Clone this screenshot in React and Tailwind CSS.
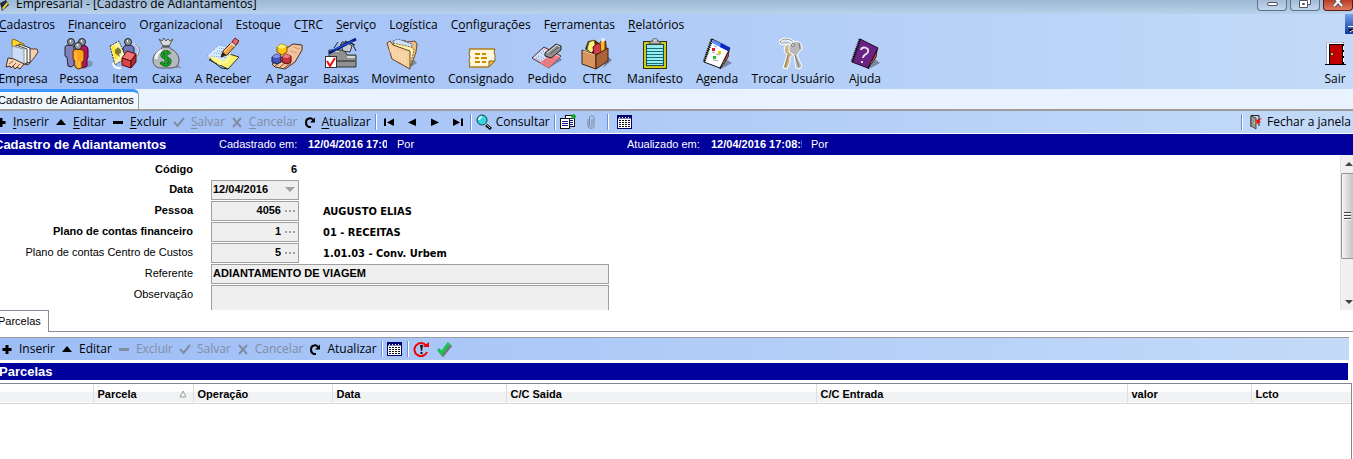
import clsx from 'clsx';

const SEGOE = 'font-["Open_Sans","Noto_Sans",sans-serif]';
const ARIAL = 'font-["Liberation_Sans",Arial,sans-serif]';

/* ---------- Large toolbar icons (32x32) ---------- */

const bigIcons = {
  empresa: (
    <>
      <path d="M17 8 L24 11 H30 L31 14 L27 20 L21 27 L16 26 Z" fill="#f6cfae" stroke="#5a3a28" />
      <path d="M5 3 L6 1 L11 3 L12 4 L17 6 V11 L5 8 Z" fill="#ffd928" stroke="#8a6a00" />
      <path d="M12 6 L23 10 V25 L12 22 Z" fill="#fff" stroke="#333" />
      <path d="M9 7 L20 11 V26 L9 22 Z" fill="#fff" stroke="#333" />
      <path d="M5 8 L17 11 V26 L5 22 Z" fill="#c9dcfa" stroke="#f8f8f8" />
      <path d="M5 8 L17 11 V26 L5 22 Z" fill="none" stroke="#444" strokeWidth="0.6" />
      <path d="M1 20 L7 21 L17 26 L13 31 L10 29 L8 31 L6 28 L4 30 L3 28 L-1 29 Z" fill="#f8d3b4" stroke="#4a2f20" />
      <path d="M2 26 L6 23 M6 28 L9 25 M10 29 L13 26" stroke="#8b5a40" fill="none" />
    </>
  ),
  pessoa: (
    <>
      <path d="M21 31 L29 28 L30 24 L25 22 Z" fill="#7f94c2" />
      <path d="M2 9 Q2 7 6 7 Q11 7 11 9 V27 L8 29 L5 28 L4 19 L2 18 Z" fill="#8580ba" stroke="#25223f" />
      <path d="M15 9 Q16 7 20 7 Q25 8 25 11 V20 L24 21 V28 L20 30 L16 28 Z" fill="#b3145f" stroke="#3d061f" />
      <path d="M10 13 Q11 11 15 11 Q20 11 21 14 V22 L19 24 V30 L15 31 L12 29 V23 L10 21 Z" fill="#ffa11a" stroke="#5d3300" />
      <path d="M13 14 V27 M16 23 V30" stroke="#ffd56a" />
      <circle cx="8" cy="4" r="3.5" fill="#8c9399" stroke="#222" />
      <circle cx="19" cy="4" r="3.5" fill="#8c9399" stroke="#222" />
      <circle cx="15" cy="8" r="3.5" fill="#9ca3a8" stroke="#222" />
      <path d="M7 3 h1 M18 3 h1 M14 7 h1" stroke="#fff" strokeWidth="2" />
    </>
  ),
  item: (
    <>
      <path d="M25 6 C31 7 31 15 27 20" fill="none" stroke="#eef4ff" strokeWidth="2" />
      <path d="M26 6 C32 8 31 16 27 20" fill="none" stroke="#333" strokeWidth="0.7" />
      <path d="M14 10 Q15 7 19 7 Q25 7 25 11 V18 H15 Z" fill="#6f78b5" stroke="#25223f" />
      <circle cx="19" cy="4" r="3.5" fill="#8c9399" stroke="#222" />
      <path d="M18 3 h1" stroke="#fff" strokeWidth="2" />
      <path d="M1 8 L10 3 L17 20 L6 27 Z" fill="#fdf7b5" stroke="#333" strokeDasharray="2 1" />
      <path d="M2 9 L6 7 L9 20 L6 22 Z" fill="#ffe92e" />
      <path d="M6 12 L9 9 L12 12 L12 15 L10 16 L11 19 L8 17 L6 15 Z" fill="#7c7a32" />
      <path d="M13 20 L18 13 L27 16 L22 23 Z" fill="#f27373" stroke="#5b0d10" />
      <path d="M13 20 L22 23 V30 L13 27 Z" fill="#dc4545" stroke="#5b0d10" />
      <path d="M22 23 L27 16 V24 L22 30 Z" fill="#a92b34" stroke="#5b0d10" />
      <path d="M4 25 Q5 31 12 30" fill="none" stroke="#f8fbff" strokeWidth="2" />
    </>
  ),
  caixa: (
    <>
      <path d="M10 30 H31 L27 27 H14 Z" fill="#8a95ab" />
      <path d="M8 1 L11 3 L13 0 L15 3 L17 1 L19 3 L22 1 L18 8 H12 Z" fill="#d7d9db" stroke="#555" />
      <path d="M12 8 H18 L20 11 C25 13 28 18 28 22 C28 27 25 30 20 30 H10 C5 30 2 27 2 22 C2 17 6 13 10 11 Z" fill="#b5b9bb" stroke="#555" />
      <path d="M11 12 C7 14 5 17 5 21" fill="none" stroke="#f7f7f7" strokeWidth="3" />
      <path d="M12 9 H18" stroke="#333" />
      <path d="M19 16 C17 13 11 13 11 17 C11 21 19 19 19 23 C19 28 12 28 10 24 M15 12 V29" fill="none" stroke="#063a0b" strokeWidth="3" />
      <path d="M19 16 C17 13 11 13 11 17 C11 21 19 19 19 23 C19 28 12 28 10 24 M15 12 V29" fill="none" stroke="#14a526" strokeWidth="2" />
    </>
  ),
  receber: (
    <>
      <path d="M2 22 L16 14 L32 19 L21 31 Z" fill="#f6f06c" stroke="#333" />
      <path d="M3 21 L14 30 L21 31" fill="none" stroke="#222" />
      <path d="M0 18 L12 7 L27 11 L17 23 Z" fill="#dcecff" stroke="#6f9ae0" strokeDasharray="1 1" />
      <path d="M5 18 L20 20 M7 15 L22 17 M10 13 L24 14 M12 10 L26 12" stroke="#6a9de8" strokeDasharray="1 1" />
      <path d="M1 18 L7 19 L17 23 L24 15 L21 25 L12 27 Z" fill="#fff98c" />
      <path d="M14 19 L16 13 L27 2 L31 5 L20 17 Z" fill="#f3a44c" stroke="#4b2c12" />
      <path d="M17 14 L27 3" stroke="#ffe0a0" />
      <path d="M14 19 L16 14 L19 17 Z" fill="#222" />
      <path d="M25 4 L28 0 L32 3 L29 7 Z" fill="#ec6b6b" stroke="#6b1a1a" />
      <path d="M24 5 L28 8" stroke="#d8d8d8" strokeWidth="2" />
    </>
  ),
  pagar: (
    <>
      <path d="M10 14 L22 6 L31 7 V12 L24 24 L14 31 L4 29 L1 26 L8 22 Z" fill="#f3c49c" stroke="#4b2e1b" />
      <path d="M4 28 L12 22 M8 30 L16 23 M12 31 L20 25" stroke="#7c5038" fill="none" />
      <path d="M22 9 L29 11 M19 13 L26 15" stroke="#d09a72" />
      <path d="M1 19 L5 16 L10 18 V24 L6 26 L1 24 Z" fill="#4456b8" stroke="#15194a" />
      <path d="M1 19 L5 16 L10 18 L6 20 Z" fill="#8896e6" />
      <path d="M11 19 L15 16 L20 18 V24 L16 26 L11 24 Z" fill="#c9343c" stroke="#4d0b10" />
      <path d="M11 19 L15 16 L20 18 L16 20 Z" fill="#f17f83" />
      <path d="M6 9 L10 6 L16 8 V14 L11 17 L6 14 Z" fill="#ffc414" stroke="#835800" />
      <path d="M6 9 L10 6 L16 8 L11 11 Z" fill="#fff06c" />
    </>
  ),
  baixas: (
    <>
      <path d="M4 12 H19 L22 17 H31 V29 H4 Z" fill="#909090" stroke="#333" />
      <path d="M5 13 H14 M22 19 H30" stroke="#d6d6d6" strokeWidth="2" />
      <path d="M10 23 H30" stroke="#222" />
      <path d="M13 13 L17 4 L27 5 L31 13 M13 4 L9 10 M20 3 L30 7" fill="none" stroke="#222" />
      <path d="M16 7 L22 4 L27 8 L25 14 L18 13 Z" fill="#c9cdd3" stroke="#333" />
      <path d="M4 15 L31 1" stroke="#061a80" strokeWidth="3" />
      <path d="M8 12 L28 3" stroke="#2c65ef" />
      <rect x="0.5" y="18.5" width="11" height="11" fill="#fff" stroke="#333" />
      <path d="M2 23 L5 28 L10 20" fill="none" stroke="#f01010" strokeWidth="2" />
    </>
  ),
  movimento: (
    <>
      <path d="M22 30 L30 25 L27 22 Z" fill="#7d88a0" />
      <path d="M10 6 L17 2 L20 4 L28 3 L30 6 L29 14 L24 28 L12 25 Z" fill="#f1bd83" stroke="#704c2c" />
      <path d="M6 3 L11 1 L25 6 L24 27 L10 20 Z" fill="#cfe0fb" stroke="#526a9a" strokeDasharray="2 1" />
      <path d="M6 5 L24 9 L27 12 L23 29 L12 22 Z" fill="#fff5a8" stroke="#857338" strokeDasharray="2 1" />
      <path d="M0 5 L3 3 L6 7 L23 13 V31 L5 21 Z" fill="#f7cf9e" stroke="#694522" />
      <path d="M3 9 V14 M6 10 V20 M9 11 V22 M12 13 V23 M15 14 V25 M18 15 V27" stroke="#fff1cf" strokeDasharray="1 1" />
    </>
  ),
  consignado: (
    <>
      <path d="M4 11 H30 L29 14 L30 17 V23 L24 29 H4 L5 26 L4 23 L5 19 L4 16 L5 13 Z" fill="#fff7dc" stroke="#8a641a" />
      <path d="M4 11 H30 M4 29 H24" stroke="#c18b20" />
      <path d="M10 16 H15 M17 16 H21 M10 20 H14 M16 20 H22 M10 24 H15 M17 24 H21" stroke="#c98c00" strokeWidth="2" />
      <path d="M24 29 L24 23 L30 23 Z" fill="#f4b92d" stroke="#8a641a" />
    </>
  ),
  pedido: (
    <>
      <path d="M18 30 L31 22 L28 19 Z" fill="#7688b0" />
      <path d="M1 20 L13 9 L30 18 L18 30 Z" fill="#f9b9c2" stroke="#34343c" />
      <path d="M2 20 L12 11 L21 15 L12 24 Z" fill="#cfe0ff" />
      <path d="M9 25 L20 16 L29 19 L18 30 Z" fill="#f67d7d" />
      <path d="M5 20 L20 27 M7 18 L22 25 M10 15 L25 22 M12 13 L20 17" stroke="#7478a8" strokeDasharray="1 2" />
      <path d="M14 15 L25 6 L30 8 V12 L20 20 L14 18 Z" fill="#8f8f8f" stroke="#222" />
      <path d="M16 15 L26 7 L29 9" fill="none" stroke="#dedede" />
      <path d="M19 16 L28 9" stroke="#555" />
    </>
  ),
  ctrc: (
    <>
      <path d="M22 30 L31 22 L27 19 Z" fill="#77809b" />
      <path d="M4 11 L7 3 L14 2 L19 6 L22 1 L25 3 L26 12 L15 18 Z" fill="#4a2b12" />
      <path d="M6 11 L8 4 L13 2 L15 10 L10 15 Z" fill="#fff47a" stroke="#5a5b10" />
      <path d="M12 9 L17 5 L21 8 V15 L13 17 Z" fill="#d23c4c" stroke="#5a0a18" />
      <path d="M19 4 Q22 1 24 4 V14 H20 Z" fill="#ffb52d" stroke="#6d4100" />
      <circle cx="22" cy="2" r="2" fill="#eee" />
      <path d="M1 12 L15 17 V31 L1 26 Z" fill="#d79461" stroke="#3d2312" />
      <path d="M15 17 L27 10 V23 L15 31 Z" fill="#aa6437" stroke="#3d2312" />
      <path d="M2 13 L14 17" stroke="#f5c69b" />
    </>
  ),
  manifesto: (
    <>
      <rect x="4.5" y="3.5" width="23" height="27" fill="#cfc91b" stroke="#33330a" />
      <rect x="7.5" y="6.5" width="17" height="21" fill="#9beaf0" stroke="#124b50" />
      <path d="M8 10.5 H24 M8 13.5 H24 M8 16.5 H24 M8 19.5 H24 M8 22.5 H24 M8 25.5 H24" stroke="#0b6f7c" />
      <path d="M10 6 L12 3 H14 V1 H18 V3 H20 L22 6 Z" fill="#b8b8b8" stroke="#444" />
      <path d="M14 2 H18" stroke="#f4f4f4" />
    </>
  ),
  agenda: (
    <>
      <path d="M20 31 L31 25 L25 21 Z" fill="#7c88a3" />
      <path d="M19 31 L21 24 L28 12 L27 19 Z" fill="#f5c718" stroke="#111" />
      <path d="M23 23 L27 15" stroke="#e12323" strokeWidth="2" />
      <path d="M11 1 L29 10 L19 30 L3 24 Z" fill="#fff" stroke="#111" />
      <path d="M12 2 L28 9 L27 13 L11 5 Z" fill="#5591ff" />
      <path d="M20 5 L29 10 L27 13 L19 9 Z" fill="#0b25c8" />
      <path d="M11 1 L3 24" stroke="#111" strokeWidth="3" strokeDasharray="1 1" />
      <path d="M13 8 L16 9 M11 14 L14 15 M15 16 L19 17 M12 22 L17 23" stroke="#aaa" />
      <rect x="11" y="10" width="3" height="3" fill="#e01428" />
      <rect x="17" y="13" width="3" height="3" fill="#eec900" />
      <rect x="12" y="18" width="3" height="3" fill="#17c238" />
    </>
  ),
  trocar: (
    <>
      <path d="M3 4 C6 -1 14 1 17 5 M3 4 C6 8 10 3 15 6" fill="none" stroke="#fff" strokeWidth="3" />
      <path d="M3 4 C6 -1 14 1 17 5 M3 4 C6 7 10 3 15 6" fill="none" stroke="#8c8c8c" />
      <path d="M8 8 Q13 4 17 9 L16 16 L13 20 L13 24 L10 31 L6 30 L10 17 L7 13 Z" fill="#cab487" stroke="#fff" />
      <path d="M11 17 L8 29" stroke="#8f7443" />
      <path d="M12 8 Q15 3 20 3 Q25 4 25 11 L20 17 L25 28 L23 31 L19 30 L17 17 L12 14 Z" fill="#b9b9b9" stroke="#fff" />
      <path d="M18 17 L22 29 M22 5 L23 11" stroke="#777" />
      <circle cx="16" cy="7" r="1.5" fill="#eee" stroke="#777" />
    </>
  ),
  ajuda: (
    <>
      <path d="M20 31 L31 25 L26 21 Z" fill="#7c88a3" />
      <path d="M19 31 L21 24 L28 12 L27 19 Z" fill="#f5c718" stroke="#111" />
      <path d="M23 23 L27 15" stroke="#e12323" strokeWidth="2" />
      <path d="M11 1 L29 10 L19 30 L3 24 Z" fill="#692483" stroke="#180820" />
      <path d="M11 1 L3 24" stroke="#111" strokeWidth="3" strokeDasharray="1 1" />
      <path d="M12 12 C13 8 20 9 19 14 C18 17 14 16 14 20 M13 23 V25" fill="none" stroke="#e8dcee" strokeWidth="2" />
    </>
  ),
  sair: (
    <>
      <path d="M8 26 V4.5 H25" fill="none" stroke="#808080" />
      <path d="M9 26 V5.5 H24" fill="none" stroke="#fff" strokeWidth="2" />
      <rect x="10" y="6" width="15" height="20" fill="#000" />
      <rect x="11" y="7" width="12" height="19" fill="#c00000" />
      <path d="M24.5 8 V26" stroke="#fff" strokeDasharray="4 2" />
      <circle cx="13" cy="16" r="1.5" fill="#ffe14a" stroke="#000" strokeWidth="0.6" />
      <path d="M6 26.5 H27" stroke="#000" />
    </>
  ),
};

function BigIcon({ name }) {
  return (
    <svg viewBox="0 0 32 32" fill="none" className="h-8 w-8 overflow-visible" aria-hidden="true">
      {bigIcons[name]}
    </svg>
  );
}

/* ---------- Small toolbar icons (16x16) ---------- */

const smallIcons = {
  plus: <path d="M8 4 V13 M3.5 8.5 H12.5" stroke="currentColor" strokeWidth="3" />,
  up: <path d="M8 5 L13 11 H3 Z" fill="currentColor" />,
  minus: <path d="M3 8.5 H13" stroke="currentColor" strokeWidth="3" />,
  check: <path d="M3 8 L6.5 12 L13 4" stroke="currentColor" strokeWidth="2" />,
  x: <path d="M4 4 L12 13 M12 4 L4 13" stroke="currentColor" strokeWidth="2" />,
  refresh: (
    <>
      <path d="M9 13 H7 C3 12 3 5 7 4.5 C9 4 10 4.5 11 6" stroke="currentColor" strokeWidth="2" />
      <path d="M8 8.5 H13 V3.5 Z" fill="currentColor" />
    </>
  ),
  first: <path d="M3 4.5 H5 V12 H3 Z M13 4.5 V12 L6 8.5 Z" fill="currentColor" />,
  prev: <path d="M12 4.5 V12 L4 8.5 Z" fill="currentColor" />,
  next: <path d="M4 4.5 V12 L12 8.5 Z" fill="currentColor" />,
  last: <path d="M11 4.5 H13 V12 H11 Z M3 4.5 V12 L10 8.5 Z" fill="currentColor" />,
  search: (
    <>
      <path d="M10 11 L15 15" stroke="#111" strokeWidth="3" />
      <path d="M10.5 10.5 L14 14" stroke="#b0b0b0" />
      <circle cx="6" cy="6" r="5" fill="#35d5dc" stroke="#15444a" />
      <path d="M3 6 C3 4 5 3 6 3" stroke="#d6ffff" strokeWidth="2" />
    </>
  ),
  copy: (
    <>
      <rect x="5.5" y="1.5" width="9" height="11" fill="#fff" stroke="#111" />
      <path d="M7 4.5 H13 M7 6.5 H13 M7 8.5 H13 M7 10.5 H13" stroke="#111480" />
      <rect x="0.5" y="4.5" width="9" height="10" fill="#fff" stroke="#111" />
      <path d="M2 7.5 H8 M2 9.5 H8 M2 11.5 H8" stroke="#111480" />
      <path d="M13.5 0 V5 M11 2.5 H16" stroke="#12b32b" strokeWidth="2" />
    </>
  ),
  clip: <path d="M5 5 V12 C5 15 11 15 11 12 V4 C11 1 6.5 1 6.5 4 V11 C6.5 13 9 13 9 11 V5" stroke="#7c879c" />,
  grid: (
    <>
      <rect x="0.5" y="1.5" width="14" height="13" fill="#fff" stroke="#00006e" />
      <path d="M0 3 H15" stroke="#00006e" strokeWidth="3" />
      <path d="M2 3.5 H13" stroke="#fff" strokeDasharray="1 2" />
      <path d="M2 6.5 H14 M2 8.5 H14 M2 10.5 H14 M2 12.5 H14" stroke="#111" strokeDasharray="2 1" />
    </>
  ),
  exit: (
    <>
      <path d="M4 13 V1.5 H12 V12" stroke="#222" />
      <path d="M4 2 L9 4 V15 L4 12 Z" fill="#9a9a92" stroke="#333" strokeWidth="0.8" />
      <rect x="7" y="8" width="1" height="2" fill="#f3d400" />
      <path d="M9 6 L15 4 L12 7 L14 8 L10 10 Z" fill="#ef1010" />
    </>
  ),
  recalc: (
    <>
      <path d="M13 4.5 A6.5 6.5 0 1 0 14 11" stroke="#f00000" strokeWidth="2" />
      <path d="M10 6 H16 V1 Z" fill="#f00000" />
      <path d="M7 4 H10 L9 10 H8 Z M7.5 11 H9.5 V13 H7.5 Z" fill="#111" />
    </>
  ),
  confirm: (
    <>
      <path d="M4 10 L7 14 L15 4" stroke="#6d7c74" strokeWidth="3" />
      <path d="M2 8 L5.5 12 L13 2" stroke="#18c552" strokeWidth="3" />
    </>
  ),
};

function SmallIcon({ name }) {
  return (
    <svg viewBox="0 0 16 16" fill="none" className="h-4 w-4 shrink-0" aria-hidden="true">
      {smallIcons[name]}
    </svg>
  );
}

/* ---------- Shared pieces ---------- */

// "&" marks the underlined access key
function Mnemonic({ text }) {
  const i = text.indexOf('&');
  if (i < 0) return <span>{text}</span>;
  return (
    <span>
      {text.slice(0, i)}
      <u className="underline-offset-2">{text[i + 1]}</u>
      {text.slice(i + 2)}
    </span>
  );
}

function ToolButton({ icon, label, title, disabled }) {
  return (
    <button
      disabled={disabled}
      aria-label={title}
      className={clsx(
        'flex items-center gap-1 whitespace-nowrap',
        disabled ? 'text-[#828da3]' : 'text-black'
      )}
    >
      <SmallIcon name={icon} />
      {label && <Mnemonic text={label} />}
    </button>
  );
}

function Separator() {
  return <div className="h-4 w-[2px] border-l border-r border-l-[#6d8fd6] border-r-white" />;
}

const menus = [
  '&Cadastros', '&Financeiro', 'Organizacional', 'Estoque', 'C&TRC', '&Serviço',
  'Logística', 'C&onfigurações', 'F&erramentas', '&Relatórios',
];

const modules = [
  ['empresa', 'Empresa', 'w-11'],
  ['pessoa', 'Pessoa', 'w-9'],
  ['item', 'Item', 'w-6'],
  ['caixa', 'Caixa', 'w-7'],
  ['receber', 'A Receber', 'w-13'],
  ['pagar', 'A Pagar', 'w-11'],
  ['baixas', 'Baixas', 'w-8'],
  ['movimento', 'Movimento', 'w-15'],
  ['consignado', 'Consignado', 'w-16'],
  ['pedido', 'Pedido', 'w-9'],
  ['ctrc', 'CTRC', 'w-8'],
  ['manifesto', 'Manifesto', 'w-13'],
  ['agenda', 'Agenda', 'w-10'],
  ['trocar', 'Trocar Usuário', 'w-20'],
  ['ajuda', 'Ajuda', 'w-8'],
];

const columns = [
  ['', 'w-[93px]'],
  ['Parcela', 'w-[100px]'],
  ['Operação', 'w-[139px]'],
  ['Data', 'w-[174px]'],
  ['C/C Saida', 'w-[310px]'],
  ['C/C Entrada', 'w-[311px]'],
  ['valor', 'w-[124px]'],
  ['Lcto', ''],
];

function ModuleButton({ icon, label, width }) {
  return (
    <button className={clsx('flex flex-col items-center whitespace-nowrap', width)}>
      <BigIcon name={icon} />
      <span className="leading-[18px]">{label}</span>
    </button>
  );
}

function TitleBar() {
  return (
    <header className="flex h-[14px] items-start overflow-hidden bg-linear-to-b from-[#9db8d3] to-[#b9d2ec]">
      <svg viewBox="0 0 12 12" className="h-3 w-3 shrink-0" aria-hidden="true">
        <path d="M0 3 L6 0 L9 5 L2 11 Z" fill="#222a3a" />
        <path d="M2 8 L7 2 L8 4 L3 10 Z" fill="#f0d238" />
      </svg>
      <h1 className="-mt-[5px] ml-1 flex-1 leading-[18px]">Empresarial - [Cadastro de Adiantamentos]</h1>
      <div className="flex gap-[3px]">
        <button aria-label="Minimizar" className="flex h-[11px] w-[30px] justify-center rounded-b-sm border border-t-0 border-[#5a7290] bg-linear-to-b from-[#a3bbd5] to-[#c4d8ec]">
          <span className="mt-[2px] h-1 w-[11px] rounded-xs border border-[#535666] bg-white" />
        </button>
        <button aria-label="Restaurar" className="flex h-[11px] w-[30px] justify-center rounded-b-sm border border-t-0 border-[#5a7290] bg-linear-to-b from-[#a3bbd5] to-[#c4d8ec]">
          <svg viewBox="0 0 12 8" className="h-2 w-3" fill="#fff" stroke="#535666">
            <path d="M3.5 -1 H11.5 V4.5 H3.5 Z" />
            <path d="M0.5 0.5 H8.5 V7.5 H0.5 Z" />
            <path d="M3.5 3.5 H5.5 V4.5 H3.5 Z" />
          </svg>
        </button>
        <button aria-label="Fechar" className="flex h-[11px] w-[30px] justify-center rounded-b-sm border border-t-0 border-[#5c1a12] bg-linear-to-b from-[#b83c28] to-[#de7a60]">
          <svg viewBox="0 0 12 8" className="h-2 w-3" fill="none">
            <path d="M2 -3 L10 6 M10 -3 L2 6" stroke="#535666" strokeWidth="4" />
            <path d="M2 -3 L10 6 M10 -3 L2 6" stroke="#fff" strokeWidth="2" />
          </svg>
        </button>
      </div>
    </header>
  );
}

function MainMenu() {
  return (
    <div className="bg-linear-to-r from-[#9dbdf6] to-[#c3daf8]">
      <div className="flex h-[22px] items-start justify-between">
        <nav className="-ml-px flex h-[22px] items-center gap-[13px]">
          {menus.map((m) => (
            <button key={m}><Mnemonic text={m} /></button>
          ))}
        </nav>
        <button aria-label="Mais botões" className="flex h-5 w-2 items-end overflow-hidden bg-linear-to-b from-[#769fe8] to-[#0a3a9c]">
          <svg viewBox="0 0 8 8" className="h-2 w-2">
            <path d="M3 0.5 H8" stroke="#fff" />
            <path d="M3 3 H8 V5 L6 6 Z" fill="#000" />
            <path d="M5 6 L8 4" stroke="#fff" />
          </svg>
        </button>
      </div>
      <div className="flex h-[53px] items-start justify-between pt-[2px] pr-2">
        <div className="ml-px flex gap-4">
          {modules.map(([icon, label, width]) => (
            <ModuleButton key={icon} icon={icon} label={label} width={width} />
          ))}
        </div>
        <ModuleButton icon="sair" label="Sair" width="w-5" />
      </div>
    </div>
  );
}

function RecordBar() {
  return (
    <div className={`flex h-[21px] items-center bg-[#00009c] text-[11px] text-white ${ARIAL}`}>
      <h2 className="-ml-[6px] w-[225px] text-[13px] font-bold whitespace-nowrap">Cadastro de Adiantamentos</h2>
      <span className="w-[89px]">Cadastrado em:</span>
      <b className="w-[79px] overflow-hidden whitespace-nowrap">12/04/2016 17:08</b>
      <span className="ml-[10px] w-[230px]">Por</span>
      <span className="w-[84px]">Atualizado em:</span>
      <b className="w-[91px] overflow-hidden whitespace-nowrap">12/04/2016 17:08:50</b>
      <span className="ml-[9px]">Por</span>
    </div>
  );
}

const fieldBox = 'flex h-5 w-[88px] items-center border border-[#a0a0a0] bg-[#efefef] font-bold';

function LookupField({ id, label, value, text, bold }) {
  return (
    <div className="flex h-[21px] items-start">
      <label htmlFor={id} className={clsx('w-[193px] text-right leading-[18px]', bold && 'font-bold')}>{label}</label>
      <div className={clsx('ml-[18px]', fieldBox)}>
        <input id={id} defaultValue={value} className="w-[69px] pb-[2px] text-right outline-none" />
        <button aria-label={`Localizar ${label}`} className="ml-1 flex gap-[2px]">
          <i className="h-[2px] w-[2px] bg-[#a0a0a0]" />
          <i className="h-[2px] w-[2px] bg-[#a0a0a0]" />
          <i className="h-[2px] w-[2px] bg-[#a0a0a0]" />
        </button>
      </div>
      <output className='ml-6 font-["DejaVu_Sans_Condensed",Tahoma,sans-serif] font-bold leading-[22px]'>{text}</output>
    </div>
  );
}

function ScrollBar() {
  return (
    <div className="flex w-[13px] flex-col items-end border-l border-[#e4e4e4] bg-[#f0f0f0]">
      <svg viewBox="0 0 8 18" className="h-[18px] w-2"><path d="M0 11 L4 7 L8 11 Z" fill="#444" /></svg>
      <div className="flex h-[86px] w-full flex-col items-center justify-center gap-px rounded-l-xs border border-r-0 border-[#979797] bg-linear-to-r from-[#f5f5f5] to-[#c4c4c8]">
        <i className="h-[2px] w-[7px] border-t border-[#444] bg-white" />
        <i className="h-[2px] w-[7px] border-t border-[#444] bg-white" />
        <i className="h-[2px] w-[7px] border-t border-[#444] bg-white" />
      </div>
      <div className="flex-1" />
      <svg viewBox="0 0 8 18" className="h-[18px] w-2"><path d="M0 8 H8 L4 12 Z" fill="#444" /></svg>
    </div>
  );
}

function RecordForm() {
  return (
    <form className={`flex text-[11px] ${ARIAL}`}>
      <div className="flex-1 pt-1">
        <div className="flex h-[21px] font-bold leading-5">
          <span className="w-[193px] text-right">Código</span>
          <output className="w-[104px] text-right">6</output>
        </div>
        <div className="flex h-[21px] items-start">
          <label htmlFor="data" className="w-[193px] text-right font-bold leading-[18px]">Data</label>
          <div className={clsx('ml-[18px]', fieldBox)}>
            <input id="data" defaultValue="12/04/2016" className="w-[73px] pb-[2px] pl-px outline-none" />
            <button aria-label="Abrir calendário">
              <svg viewBox="0 0 10 6" className="h-[6px] w-[10px]"><path d="M0 0 H10 L5 5 Z" fill="#a0a0a0" /></svg>
            </button>
          </div>
        </div>
        <LookupField id="pessoa" label="Pessoa" value="4056" text="AUGUSTO ELIAS" bold />
        <LookupField id="financeiro" label="Plano de contas financeiro" value="1" text="01 - RECEITAS" bold />
        <LookupField id="custos" label="Plano de contas Centro de Custos" value="5" text="1.01.03 - Conv. Urbem" />
        <div className="flex h-[21px] items-start">
          <label htmlFor="referente" className="w-[193px] text-right leading-[18px]">Referente</label>
          <input id="referente" defaultValue="ADIANTAMENTO DE VIAGEM" className="ml-[18px] h-5 w-[398px] border border-[#a0a0a0] bg-[#efefef] px-px pb-[2px] font-bold outline-none" />
        </div>
        <div className="flex items-start">
          <label htmlFor="observacao" className="w-[193px] text-right leading-[18px]">Observação</label>
          <textarea id="observacao" className="ml-[18px] h-[25px] w-[398px] resize-none border border-b-0 border-[#a0a0a0] bg-[#efefef] outline-none" />
        </div>
      </div>
      <ScrollBar />
    </form>
  );
}

function ParcelasTable() {
  return (
    <div className={`mr-px mt-[3px] min-h-20 border-t border-r border-[#828790] text-[11px] ${ARIAL}`}>
      <table className="w-full table-fixed border-collapse">
        <thead>
          <tr className="h-[19px] border-b border-[#d5d5d5] bg-linear-to-b from-white from-40% to-[#f1f2f4] to-45%">
            {columns.map(([name, width], i) => (
              <th key={name} className={clsx('p-0 pt-px pl-1 text-left font-bold', i > 0 && 'border-l border-[#dedfe1]', width)}>
                <span className="flex items-center justify-between pr-[6px]">
                  {name}
                  {name === 'Parcela' && (
                    <svg viewBox="0 0 8 8" className="h-2 w-2" fill="none"><path d="M1 7 L4 1 L7 7 Z" stroke="#a0a0a0" /></svg>
                  )}
                </span>
              </th>
            ))}
          </tr>
        </thead>
        <tbody />
      </table>
    </div>
  );
}

export default function App() {
  return (
    <div className={`h-screen overflow-hidden bg-white text-[12px] text-black ${SEGOE}`}>
      <TitleBar />
      <MainMenu />

      {/* Open windows */}
      <div className={`flex h-[22px] border-b-2 border-[#9c9c9c] bg-[#e8f3ff] text-[11px] ${ARIAL}`}>
        <button className="flex items-center rounded-tr-md border-t-[3px] border-r border-t-[#3f96fb] border-r-[#9c9c9c] bg-[#f0f7ff] pr-1 whitespace-nowrap">
          <span className="-ml-[2px]">Cadastro de Adiantamentos</span>
        </button>
      </div>

      {/* Record toolbar */}
      <div className="flex h-[23px] items-center justify-between border-b border-white bg-linear-to-r from-[#9dbdf6] to-[#c3daf8]">
        <div className="-ml-[7px] flex items-center gap-1">
          <ToolButton icon="plus" label="&Inserir" />
          <ToolButton icon="up" label="&Editar" />
          <ToolButton icon="minus" label="&Excluir" />
          <ToolButton icon="check" label="&Salvar" disabled />
          <ToolButton icon="x" label="&Cancelar" disabled />
          <ToolButton icon="refresh" label="&Atualizar" />
          <Separator />
          <div className="flex gap-[7px]">
            <ToolButton icon="first" title="Primeiro" />
            <ToolButton icon="prev" title="Anterior" />
            <ToolButton icon="next" title="Próximo" />
            <ToolButton icon="last" title="Último" />
          </div>
          <Separator />
          <ToolButton icon="search" label="Consultar" />
          <Separator />
          <div className="flex gap-[7px] pr-1">
            <ToolButton icon="copy" title="Duplicar" />
            <ToolButton icon="clip" title="Anexos" disabled />
          </div>
          <Separator />
          <div className="pl-1">
            <ToolButton icon="grid" title="Grade" />
          </div>
        </div>
        <div className="flex items-center gap-1 pr-[2px]">
          <Separator />
          <ToolButton icon="exit" label="Fechar a janela" />
        </div>
      </div>

      <RecordBar />
      <RecordForm />

      {/* Detail tabs */}
      <div className={`flex h-[22px] border-b border-[#8c8c9a] text-[11px] ${ARIAL}`}>
        <button className="-mb-px border-t border-r border-[#8c8c9a] bg-white pr-[7px]">
          <span className="-ml-[2px]">Parcelas</span>
        </button>
      </div>

      <div className="mr-1 mt-[5px] flex h-[23px] items-center border-t border-[#9c9c9c] bg-linear-to-r from-[#9dbdf6] to-[#c3daf8]">
        <div className="-ml-px flex items-center gap-1">
          <ToolButton icon="plus" label="Inserir" />
          <ToolButton icon="up" label="Editar" />
          <ToolButton icon="minus" label="Excluir" disabled />
          <ToolButton icon="check" label="Salvar" disabled />
          <ToolButton icon="x" label="Cancelar" disabled />
          <ToolButton icon="refresh" label="Atualizar" />
          <Separator />
          <ToolButton icon="grid" title="Grade" />
          <Separator />
          <div className="flex gap-[7px]">
            <ToolButton icon="recalc" title="Recalcular" />
            <ToolButton icon="confirm" title="Confirmar" />
          </div>
        </div>
      </div>

      <h2 className={`mr-[5px] mt-[3px] h-[17px] bg-[#00009c] text-[13px] font-bold leading-[17px] text-white ${ARIAL}`}>
        <span className="-ml-px">Parcelas</span>
      </h2>

      <ParcelasTable />
    </div>
  );
}
